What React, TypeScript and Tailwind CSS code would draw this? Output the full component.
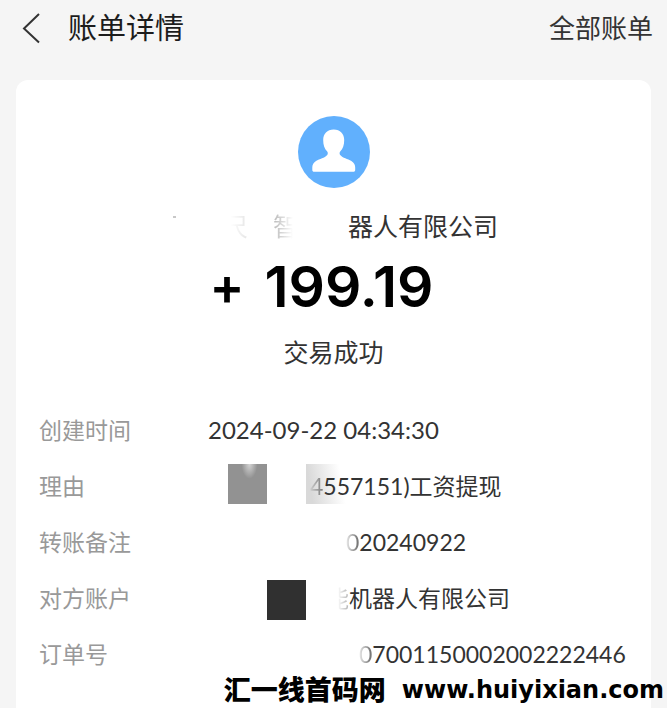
import React from "react";

interface BillRow {
    label: string;
    value: React.ReactNode;
}

// Gradient-filled text, fades in from the left edge
const FADE_IN =
    "bg-linear-to-r from-[#ededed] to-[#6a6a6a] bg-clip-text text-transparent";

const rows: BillRow[] = [
    {
        label: "创建时间",
        value: <span className="text-[24px]">2024-09-22 04:34:30</span>,
    },
    {
        label: "理由",
        value: (
            <>
                <span className="ml-5 mb-1 h-10 w-[39px] bg-[radial-gradient(ellipse_at_55%_0%,#d4d4d4_0%,#929292_26%)]" />
                <span className="ml-[39px] mb-1 h-10 w-10 bg-[linear-gradient(80deg,#d9d9d9_15%,#ffffff_85%)]" />
                <span className="-ml-9">
                    <span className="bg-linear-to-r from-[#d0d0d0] to-[#7a7a7a] bg-clip-text text-transparent">
                        4
                    </span>
                    557151)工资提现
                </span>
            </>
        ),
    },
    {
        label: "转账备注",
        value: (
            <span className="ml-[138px]">
                <span className={FADE_IN}>0</span>20240922
            </span>
        ),
    },
    {
        label: "对方账户",
        value: (
            <>
                <span className="ml-[59px] mt-1 h-10 w-[39px] bg-[#303030]" />
                <span className="ml-5">
                    <span className="bg-linear-to-r from-white from-50% to-[#b0b0b0] bg-clip-text text-transparent">
                        能
                    </span>
                    机器人有限公司
                </span>
            </>
        ),
    },
    {
        label: "订单号",
        value: (
            <span className="ml-[151px]">
                <span className={FADE_IN}>0</span>7001150002002222446
            </span>
        ),
    },
];

const Avatar: React.FC = () => (
    <svg viewBox="0 0 72 72" className="h-[72px] w-[72px]" aria-hidden="true">
        <circle cx="36" cy="36" r="36" fill="#61b0fd" />
        <path
            fill="#fff"
            d="M35.700 13.500c-6.500 0-10.500 4.300-10.500 10.500 0 5 1.200 8.500 4 11.500.8 1 .8 2.500 0 3.500-2.500 3-7.500 3.800-11.200 6-2.800 1.700-3.700 4-3.700 6.500v2.200c0 1.400.6 2 2 2h38.900c1.400 0 2-.6 2-2v-2.200c0-2.500-1-4.800-3.800-6.500-3.700-2.200-8.700-3-11.200-6-.8-1-.8-2.500 0-3.500 2.800-3 4-6.500 4-11.500 0-6.200-4-10.500-10.500-10.500z"
        />
    </svg>
);

const Header: React.FC = () => (
    <header className="flex h-20 items-start justify-between pl-5 pr-[14px] pt-2">
        <div className="flex items-center">
            <button type="button" aria-label="返回" className="flex h-10 w-12 items-center">
                <svg viewBox="0 0 24 32" className="h-8 w-6" fill="none" stroke="#333" strokeWidth="2">
                    <path d="M19 2 4 16.500 19 30.500" />
                </svg>
            </button>
            <h1 className="text-[29px] leading-10 text-[#1c1c1c]">账单详情</h1>
        </div>
        <a href="#bills" className="text-[26px] leading-10 text-[#333]">
            全部账单
        </a>
    </header>
);

const App: React.FC = () => {
    return (
        <div className="relative min-h-screen overflow-hidden bg-[#f5f5f5] font-['Lato','Noto_Sans_CJK_SC',sans-serif] text-[#333]">
            <Header />
            <main className="mx-4 min-h-[calc(100vh-80px)] rounded-t-xl bg-white pt-9">
                <section className="flex flex-col items-center whitespace-nowrap">
                    <Avatar />
                    <h2 className="mt-5 flex pl-1 text-[25px] leading-9">
                        <span className="mt-2 mr-[47px] h-[2px] w-[3px] bg-[#c8c8c8]" />
                        <span className="bg-linear-to-r from-white from-30% to-[#e4e4e4] bg-clip-text text-transparent">
                            尺
                        </span>
                        <span className="ml-[25px] mr-[50px] bg-linear-to-r from-[#b8b8b8] to-white to-80% bg-clip-text text-transparent">
                            智
                        </span>
                        器人有限公司
                    </h2>
                    <p className="mt-2 flex gap-5 pr-6 font-['Inter',sans-serif] text-[57px] font-semibold leading-[70px] text-black">
                        <span className="text-[52px]">+</span>
                        <span>199.19</span>
                    </p>
                    <p className="mt-3 text-[25px] leading-9">交易成功</p>
                </section>
                <dl className="mt-8 whitespace-nowrap pl-[23px] text-[23px]">
                    {rows.map((row) => (
                        <div key={row.label} className="flex h-14 items-center">
                            <dt className="w-[169px] shrink-0 text-[#999]">{row.label}</dt>
                            <dd className="flex items-center">{row.value}</dd>
                        </div>
                    ))}
                </dl>
            </main>
            {/* site watermark */}
            <p className="absolute bottom-0 right-[3px] flex items-center gap-4 whitespace-nowrap leading-9 text-black">
                <span className="text-[27px] font-black">汇一线首码网</span>
                <span className="font-['DejaVu_Sans',sans-serif] text-[24px] font-bold">
                    www.huiyixian.com
                </span>
            </p>
        </div>
    );
};

export default App;
